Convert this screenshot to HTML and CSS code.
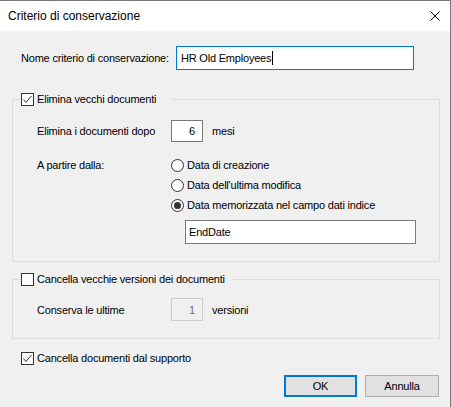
FILE: index.html
```html
<!DOCTYPE html>
<html lang="it">
<head>
<meta charset="utf-8">
<title>Criterio di conservazione</title>
<link rel="stylesheet" href="styles.css">
</head>
<body>
<div class="window">
  <div class="titlebar">
    <span class="title">Criterio di conservazione</span>
    <svg class="close" width="10" height="10" viewBox="0 0 10 10" aria-label="Chiudi"><path d="M0.5 0.5L9.5 9.5M9.5 0.5L0.5 9.5" stroke="#000" stroke-width="1" fill="none"/></svg>
  </div>
  <div class="content">
    <div class="name-row">
      <span class="name-label">Nome criterio di conservazione:</span>
      <div class="textbox focused"><span>HR Old Employees</span><span class="caret"></span></div>
    </div>

    <fieldset class="group group-delete">
      <legend class="legend legend-delete">
        <span class="check"><svg width="11" height="11" viewBox="0 0 11 11"><path d="M1.5 5.5L4 8.5L9.5 2" stroke="#333" stroke-width="1" fill="none"/></svg></span>
        <span>Elimina vecchi documenti</span>
      </legend>
      <div class="grid">
        <span class="row-label">Elimina i documenti dopo</span>
        <div class="spin-row"><div class="spin">6</div><span>mesi</span></div>
        <span class="from-label">A partire dalla:</span>
        <div class="radios">
          <div class="radio-row"><span class="radio"></span><span>Data di creazione</span></div>
          <div class="radio-row"><span class="radio"></span><span>Data dell'ultima modifica</span></div>
          <div class="radio-row"><span class="radio selected"></span><span>Data memorizzata nel campo dati indice</span></div>
          <div class="textbox field">EndDate</div>
        </div>
      </div>
    </fieldset>

    <fieldset class="group group-versions">
      <legend class="legend legend-versions">
        <span class="check"></span>
        <span>Cancella vecchie versioni dei documenti</span>
      </legend>
      <div class="grid">
        <span class="row-label">Conserva le ultime</span>
        <div class="spin-row"><div class="spin disabled">1</div><span>versioni</span></div>
      </div>
    </fieldset>

    <div class="check-row">
      <span class="check"><svg width="11" height="11" viewBox="0 0 11 11"><path d="M1.5 5.5L4 8.5L9.5 2" stroke="#333" stroke-width="1" fill="none"/></svg></span>
      <span>Cancella documenti dal supporto</span>
    </div>

    <div class="buttons">
      <div class="button default">OK</div>
      <div class="button">Annulla</div>
    </div>
  </div>
</div>
</body>
</html>
```

FILE: styles.css
```css
html, body {
  margin: 0;
  padding: 0;
  background: #ffffff;
}

body {
  font-family: "Liberation Sans", Arial, sans-serif;
  font-size: 11px;
  letter-spacing: -0.2px;
  color: #000000;
}

.window {
  width: 451px;
  height: 407px;
  box-sizing: border-box;
  border-top: 1px solid #7a7a7a;
  border-right: 1px solid #7a7a7a;
  background: #f0f0f0;
  display: flex;
  flex-direction: column;
  overflow: hidden;
}

.titlebar {
  height: 30px;
  flex: none;
  background: #ffffff;
  display: flex;
  align-items: center;
  justify-content: space-between;
  padding: 0 10px 0 8px;
}

.title {
  font-size: 12px;
  letter-spacing: 0;
}

.close {
  display: block;
}

.content {
  padding: 15px 10px 0 12px;
  display: flex;
  flex-direction: column;
}

.name-row {
  display: flex;
  align-items: center;
  height: 24px;
  padding-left: 9px;
}

.name-label {
  width: 155px;
  flex: none;
}

.textbox {
  box-sizing: border-box;
  height: 24px;
  background: #ffffff;
  border: 1px solid #7a7a7a;
  display: flex;
  align-items: center;
  padding-left: 4px;
}

.textbox.focused {
  width: 238px;
  border-color: #0078d7;
}

.caret {
  width: 1px;
  height: 14px;
  background: #000000;
  margin-left: 1px;
}

.group {
  margin: 0;
  padding: 0 0 17px 7px;
  border: 1px solid #dcdcdc;
  min-width: 0;
}

.group-delete {
  margin-top: 22px;
}

.group-versions {
  margin-top: 10px;
}

.legend {
  display: flex;
  align-items: center;
  gap: 3px;
  height: 14px;
  padding: 0 16px 0 1px;
  margin: 0;
}

.legend-versions {
  padding-right: 8px;
}

.check {
  box-sizing: border-box;
  width: 13px;
  height: 13px;
  border: 1px solid #333333;
  background: #ffffff;
  display: flex;
  align-items: center;
  justify-content: center;
  flex: none;
}

.check svg {
  display: block;
}

.grid {
  display: grid;
  grid-template-columns: 134px 1fr;
  row-gap: 13px;
  margin: 14px 0 0 17px;
}

.group-versions .grid {
  margin-top: 12px;
}

.row-label {
  align-self: center;
}

.from-label {
  line-height: 20px;
  align-self: start;
}

.spin-row {
  display: flex;
  align-items: center;
  gap: 9px;
}

.spin {
  box-sizing: border-box;
  width: 32px;
  height: 22px;
  background: #ffffff;
  border: 1px solid #7a7a7a;
  display: flex;
  align-items: center;
  justify-content: flex-end;
  padding-right: 7px;
}

.spin.disabled {
  height: 23px;
  background: #f0f0f0;
  border-color: #cccccc;
  color: #6d6d6d;
}

.radios {
  display: flex;
  flex-direction: column;
}

.radio-row {
  display: flex;
  align-items: center;
  gap: 3px;
  height: 20px;
}

.radio {
  box-sizing: border-box;
  width: 13px;
  height: 13px;
  border: 1px solid #333333;
  border-radius: 50%;
  background: #ffffff;
  display: flex;
  align-items: center;
  justify-content: center;
  flex: none;
}

.radio.selected::after {
  content: "";
  width: 7px;
  height: 7px;
  border-radius: 50%;
  background: #333333;
}

.textbox.field {
  width: 231px;
  margin: 5px 0 0 14px;
  padding-left: 3px;
}

.check-row {
  display: flex;
  align-items: center;
  gap: 3px;
  height: 14px;
  margin: 12px 0 0 9px;
}

.buttons {
  display: flex;
  justify-content: flex-end;
  gap: 8px;
  margin-top: 10px;
  padding-right: 1px;
}

.button {
  box-sizing: border-box;
  width: 74px;
  height: 22px;
  background: #e1e1e1;
  border: 1px solid #adadad;
  display: flex;
  align-items: center;
  justify-content: center;
}

.button.default {
  width: 73px;
  border: 2px solid #0078d7;
}
```
